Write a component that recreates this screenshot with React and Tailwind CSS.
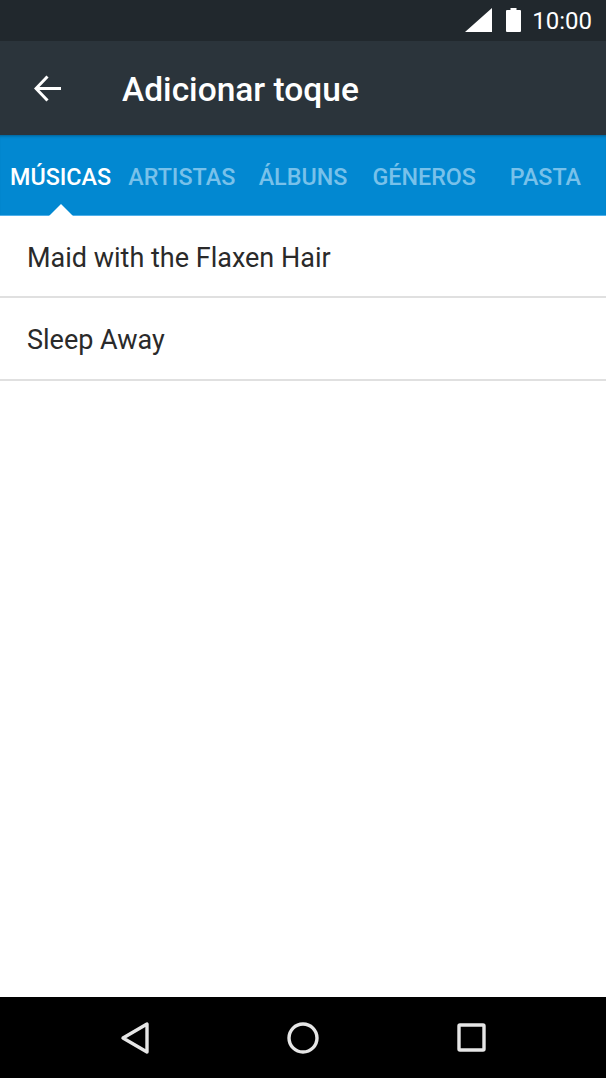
const tabs = ["MÚSICAS", "ARTISTAS", "ÁLBUNS", "GÉNEROS", "PASTA"];
const songs = ["Maid with the Flaxen Hair", "Sleep Away"];

const App = () => {
  return (
    <div className="h-[1078px] w-[606px] flex flex-col overflow-hidden bg-white font-['Roboto',sans-serif]">
      {/* Status bar */}
      <div className="h-[41px] shrink-0 bg-[#21282d] flex items-center justify-end pr-[14px] gap-[10px]">
        <svg width="28" height="24" viewBox="0 0 28 24" className="mt-[-1px] mr-[2px]">
          <path d="M0 24 L27 0 V24 Z" fill="#fff" />
        </svg>
        <svg width="17" height="24" viewBox="0 0 17 24" className="mt-[-1px]">
          <path d="M5.5 0 H11.5 V2 H15 A1 1 0 0 1 16 3 V23 A1 1 0 0 1 15 24 H2 A1 1 0 0 1 1 23 V3 A1 1 0 0 1 2 2 H5.5 Z" fill="#fff" />
        </svg>
        <span className="text-[24px] leading-none text-white">10:00</span>
      </div>

      {/* Toolbar */}
      <div className="h-[94px] shrink-0 bg-[#2b343b] flex items-center">
        <svg width="28" height="27" viewBox="0 0 28 27" fill="none" stroke="#fff" strokeWidth="3" className="ml-[34px]">
          <path d="M27 13.5 H2" />
          <path d="M13.5 1.5 L2 13.5 L13.5 25.5" />
        </svg>
        <h1 className="ml-[60px] pt-[4px] text-[33.5px] leading-none font-medium text-white">Adicionar toque</h1>
      </div>

      {/* Tabs */}
      <div className="relative h-[81px] shrink-0 grid grid-cols-5 items-center bg-[#0288d1] border-b border-[#4fb0ea] shadow-[inset_0_3px_3px_-2px_rgba(0,0,0,0.3)]">
        {tabs.map((tab, i) => (
          <span
            key={tab}
            className={`pt-[6px] text-center text-[23.3px] leading-none font-medium ${i === 0 ? "text-white" : "text-[#78c1ea]"}`}
          >
            {tab}
          </span>
        ))}
        <svg width="24" height="12" viewBox="0 0 24 12" className="absolute left-[49px] bottom-[-1px]">
          <path d="M0 12 L12 0 L24 12 Z" fill="#fff" />
        </svg>
      </div>

      {/* Songs */}
      <div className="flex-1">
        {songs.map((song) => (
          <div key={song} className="h-[83px] first:h-[82px] flex items-center pl-[27px] pt-[4px] border-b-2 border-[#e0e0e0] text-[27px] leading-none text-[#2a2a2a]">
            {song}
          </div>
        ))}
      </div>

      {/* Nav bar */}
      <div className="h-[81px] shrink-0 bg-black flex items-center">
        <svg width="30" height="34" viewBox="0 0 30 34" fill="none" stroke="#e6e6e6" strokeWidth="3.4" strokeLinejoin="round" className="ml-[120px]">
          <path d="M27 3 V31 L3 17 Z" />
        </svg>
        <svg width="32" height="32" viewBox="0 0 32 32" fill="none" stroke="#e6e6e6" strokeWidth="3.4" className="ml-[137px]">
          <circle cx="16" cy="16" r="14" />
        </svg>
        <svg width="29" height="29" viewBox="0 0 29 29" fill="none" stroke="#e6e6e6" strokeWidth="3.4" strokeLinejoin="round" className="ml-[138px]">
          <rect x="2" y="2" width="25" height="25" rx="1" />
        </svg>
      </div>
    </div>
  );
};

export default App;
